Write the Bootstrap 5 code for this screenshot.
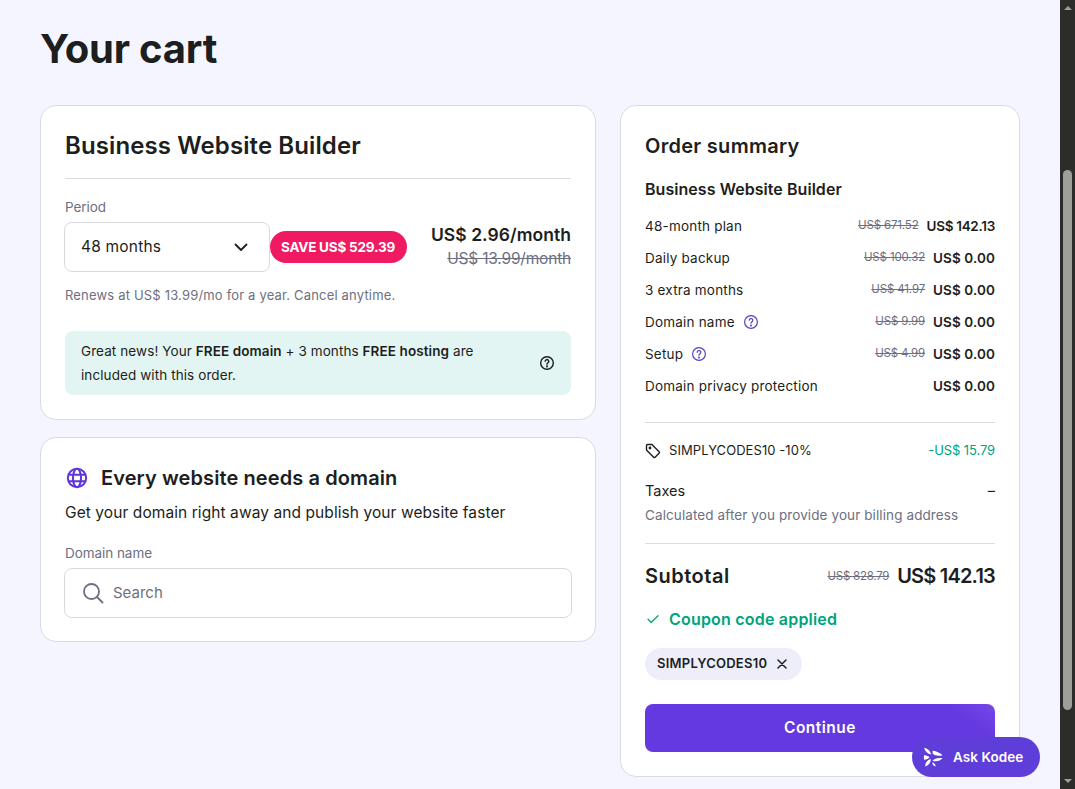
<!DOCTYPE html>
<html lang="en">
<head>
<meta charset="utf-8">
<title>Your cart</title>
<link href="https://cdn.jsdelivr.net/npm/bootstrap@5.3.0/dist/css/bootstrap.min.css" rel="stylesheet">
<style>
html,body{height:789px;overflow:hidden}
body{font-family:Inter,"Liberation Sans",sans-serif;color:#1d1e20;background:#f4f5ff;font-size:14px}
.shell{height:789px}
.pagearea{width:1060px;padding:0 40px;position:relative}
.pagetitle{font-size:40px;font-weight:700;line-height:44px;margin:27px 0 34px;letter-spacing:-.2px}
.colleft{width:556px;gap:17px}
.colright{width:400px}
.panel{background:#fff;border:1px solid #d8dae6;border-radius:16px;padding:24px}
.paneltop{height:315px}
.paneldomain{height:205px}
.panelsum{height:672px}
.paneltitle{font-size:24px;font-weight:600;line-height:32px;margin:0;letter-spacing:.1px}
.rule{border-top:1px solid #dadce0;opacity:1;margin:0}
.fieldlabel{font-size:13.5px;line-height:20px;color:#6d7081;letter-spacing:-.05px}
.pick{width:206px;height:50px;margin-left:-1px;border:1px solid #d8dae0;border-radius:8px;padding:0 21px 0 16px;font-size:15.5px;letter-spacing:.2px}
.savepill{height:32px;padding:0 12px 0 11px;background:#f01a62;color:#fff;border-radius:16px;font-size:13.5px;font-weight:700;line-height:32px;white-space:nowrap;letter-spacing:-.2px}
.pricenow{font-size:17.5px;font-weight:600;line-height:24px;letter-spacing:.05px;margin-top:-2px}
.priceold{font-size:15.5px;line-height:22px;color:#6d7081;text-decoration:line-through;margin-top:1px;letter-spacing:-.2px}
.mutedline{font-size:13px;line-height:20px;color:#6d7081;letter-spacing:.18px}
.newsbox{background:#e3f5f2;border-radius:8px;height:64px;padding:8px 16px;font-size:13.5px;line-height:24px;letter-spacing:.09px}
.newstext{width:420px}
.domaintitle{font-size:20px;font-weight:600;line-height:28px;letter-spacing:.1px}
.domainsub{font-size:15.5px;line-height:24px;letter-spacing:.08px}
.searchbox{height:50px;margin:5px -1px 0;border:1px solid #d8dae0;border-radius:8px;padding:0 17px;gap:9px;color:#6d7081;font-size:15px}
.sumtitle{font-size:20px;font-weight:600;line-height:32px;letter-spacing:.28px}
.sumname{font-size:16px;font-weight:600;line-height:24px;margin-top:15px;margin-bottom:9px;letter-spacing:.05px}
.sumrow{height:32px;font-size:13.5px;letter-spacing:.2px}
.strike{font-size:11.5px;color:#6d7081;text-decoration:line-through;margin-right:8px;letter-spacing:-.15px}
.amount{font-size:13.5px;font-weight:600;letter-spacing:-.3px}
.zeroamt{letter-spacing:.1px}
.couponline{height:24px;font-size:13px;letter-spacing:.07px}
.greenamt{color:#00a37a;letter-spacing:-.1px}
.subtotal{font-size:20px;font-weight:600;line-height:32px;letter-spacing:.5px}
.subnow{letter-spacing:-.8px}
.subold{font-size:11.5px;color:#6d7081;text-decoration:line-through;margin-right:8px;letter-spacing:-.25px;font-weight:400}
.applied{color:#00a37a;font-size:16px;font-weight:600;line-height:24px;letter-spacing:.2px}
.chipcode{height:32px;padding:0 15px 0 12px;background:#eeeefb;border-radius:16px;font-size:13px;font-weight:600;letter-spacing:.25px;gap:10px}
.gocontinue{height:48px;background:linear-gradient(215deg,#7448ea 0,#6539e0 12%,#6539e0 100%);border:0;border-radius:8px;color:#fff;font-size:15.5px;font-weight:600;width:100%;letter-spacing:.5px}
.askkodee{position:absolute;left:912px;top:737px;width:128px;height:40px;background:#5f3dd9;color:#fff;border-radius:20px;font-size:13.5px;font-weight:600;padding-left:11px;gap:10px;letter-spacing:.05px}
.scrolltrack{width:15px;height:789px;background:#2c2c2a;position:relative}
.scrollup{width:0;height:0;border-left:4px solid transparent;border-right:4px solid transparent;border-bottom:4px solid #9f9f9a;margin:6px auto 0}
.scrolldown{width:0;height:0;border-left:4px solid transparent;border-right:4px solid transparent;border-top:4px solid #9f9f9a;margin:0 auto 6px}
.scrollthumb{width:9px;height:540px;background:#9f9f9a;border-radius:5px;margin:0 auto}
.periodrow{margin-top:5px}
</style>
</head>
<body>
<div class="d-flex shell">
  <div class="pagearea flex-shrink-0">
    <h1 class="pagetitle">Your cart</h1>
    <div class="d-flex gap-4 align-items-start">
      <div class="colleft d-flex flex-column">
        <section class="panel paneltop">
          <h2 class="paneltitle mb-3">Business Website Builder</h2>
          <hr class="rule">
          <div class="fieldlabel" style="margin-top:18px">Period</div>
          <div class="d-flex align-items-center periodrow">
            <div class="pick d-flex align-items-center justify-content-between bg-white flex-shrink-0">
              <span>48 months</span>
              <svg width="14" height="9" viewBox="0 0 14 9" fill="none" stroke="#1d1e20" stroke-width="1.8" stroke-linecap="round" stroke-linejoin="round"><path d="M1.5 1.5 7 7l5.5-5.5"/></svg>
            </div>
            <span class="savepill">SAVE US$ 529.39</span>
            <div class="ms-auto text-end">
              <div class="pricenow">US$ 2.96/month</div>
              <div class="priceold">US$ 13.99/month</div>
            </div>
          </div>
          <div class="mutedline" style="margin-top:13px">Renews at US$ 13.99/mo for a year. Cancel anytime.</div>
          <div class="newsbox d-flex align-items-center justify-content-between" style="margin-top:26px">
            <div class="newstext">Great news! Your <b class="fw-semibold">FREE domain</b> + 3 months <b class="fw-semibold">FREE hosting</b> are included with this order.</div>
            <svg width="16" height="16" viewBox="0 0 16 16" fill="none" stroke="#1d1e20" stroke-width="1.4" stroke-linecap="round"><circle cx="8" cy="8" r="6.3"/><path d="M6.2 6.3a1.8 1.8 0 1 1 2.7 1.6c-.6.3-.9.7-.9 1.3"/><circle cx="8" cy="11.4" r=".4" fill="#1d1e20"/></svg>
          </div>
        </section>
        <section class="panel paneldomain">
          <div class="d-flex align-items-center" style="margin-top:2px">
            <svg width="22" height="22" viewBox="0 0 24 24" fill="none" stroke="#6136d8" stroke-width="2.2" class="flex-shrink-0" style="margin:0 13px 0 1px"><circle cx="12" cy="12" r="10"/><ellipse cx="12" cy="12" rx="4.4" ry="10"/><path d="M2.6 8.5h18.8M2.6 15.5h18.8"/></svg>
            <span class="domaintitle">Every website needs a domain</span>
          </div>
          <div class="domainsub" style="margin-top:9px">Get your domain right away and publish your website faster</div>
          <div class="fieldlabel" style="margin-top:18px">Domain name</div>
          <div class="searchbox d-flex align-items-center">
            <svg width="22" height="22" viewBox="0 0 22 22" fill="none" stroke="#6d7081" stroke-width="1.8" stroke-linecap="round" class="flex-shrink-0"><circle cx="9.500" cy="9.500" r="7.500"/><path d="m15 15 5.500 5.500"/></svg>
            <span>Search</span>
          </div>
        </section>
      </div>
      <aside class="colright panel panelsum">
        <div class="sumtitle">Order summary</div>
        <div class="sumname">Business Website Builder</div>
        <div class="sumrow d-flex align-items-center"><span>48-month plan</span><span class="ms-auto strike">US$ 671.52</span><span class="amount">US$ 142.13</span></div>
        <div class="sumrow d-flex align-items-center"><span>Daily backup</span><span class="ms-auto strike">US$ 100.32</span><span class="amount zeroamt">US$ 0.00</span></div>
        <div class="sumrow d-flex align-items-center"><span>3 extra months</span><span class="ms-auto strike">US$ 41.97</span><span class="amount zeroamt">US$ 0.00</span></div>
        <div class="sumrow d-flex align-items-center"><span>Domain name</span>
          <svg class="ms-2" width="16" height="16" viewBox="0 0 16 16" fill="none" stroke="#5a3fc0" stroke-width="1.2" stroke-linecap="round"><circle cx="8" cy="8" r="6.4"/><path d="M6.2 6.3a1.8 1.8 0 1 1 2.7 1.6c-.6.3-.9.7-.9 1.3"/><circle cx="8" cy="11.4" r=".4" fill="#5a3fc0"/></svg>
          <span class="ms-auto strike">US$ 9.99</span><span class="amount zeroamt">US$ 0.00</span></div>
        <div class="sumrow d-flex align-items-center"><span>Setup</span>
          <svg class="ms-2" width="16" height="16" viewBox="0 0 16 16" fill="none" stroke="#5a3fc0" stroke-width="1.2" stroke-linecap="round"><circle cx="8" cy="8" r="6.4"/><path d="M6.2 6.3a1.8 1.8 0 1 1 2.7 1.6c-.6.3-.9.7-.9 1.3"/><circle cx="8" cy="11.4" r=".4" fill="#5a3fc0"/></svg>
          <span class="ms-auto strike">US$ 4.99</span><span class="amount zeroamt">US$ 0.00</span></div>
        <div class="sumrow d-flex align-items-center"><span>Domain privacy protection</span><span class="ms-auto amount zeroamt">US$ 0.00</span></div>
        <hr class="rule" style="margin-top:20px">
        <div class="couponline d-flex align-items-center" style="margin-top:16px">
          <svg class="me-2" width="16" height="16" viewBox="0 0 16 16" fill="none" stroke="#1d1e20" stroke-width="1.4" stroke-linejoin="round"><path d="M1.500 2.600c0-.6.5-1.100 1.100-1.100h4.300l7.200 7.200c.4.4.4 1.100 0 1.500l-4 4c-.4.4-1.100.4-1.500 0L1.500 7z"/><circle cx="5" cy="5" r=".7" fill="#1d1e20"/></svg>
          <span>SIMPLYCODES10 -10%</span><span class="ms-auto greenamt">-US$ 15.79</span></div>
        <div class="d-flex justify-content-between" style="margin-top:16px;font-size:14.5px;line-height:24px"><span>Taxes</span><span>–</span></div>
        <div class="mutedline" style="line-height:24px;letter-spacing:.1px;font-size:13.5px">Calculated after you provide your billing address</div>
        <hr class="rule" style="margin-top:16px">
        <div class="d-flex align-items-center subtotal" style="margin-top:16px"><span>Subtotal</span><span class="ms-auto subold">US$ 828.79</span><span class="subnow">US$ 142.13</span></div>
        <div class="d-flex align-items-center gap-2 applied" style="margin-top:15px">
          <svg width="16" height="16" viewBox="0 0 16 16" fill="none" stroke="#00a37a" stroke-width="1.3" stroke-linecap="round" stroke-linejoin="round"><path d="m3 8.300 3.200 3.200L13 4.800"/></svg>
          <span>Coupon code applied</span></div>
        <div class="d-flex" style="margin-top:17px"><span class="chipcode d-inline-flex align-items-center">SIMPLYCODES10
          <svg width="10" height="10" viewBox="0 0 10 10" fill="none" stroke="#1d1e20" stroke-width="1.5" stroke-linecap="round"><path d="m1 1 8 8M9 1 1 9"/></svg></span></div>
        <button class="gocontinue d-block" style="margin-top:24px">Continue</button>
      </aside>
    </div>
    <div class="askkodee d-flex align-items-center">
      <svg width="20" height="20" viewBox="0 0 20 20" fill="#fff"><path d="M1 .8c3.300.4 6 2.700 7.200 6.600C4.700 7 2 4.600 1 .8zM1.200 12.800C.6 11 .7 9.300 1.500 7.900c2.300.5 4.100 1.300 5 2.300-1 1.400-3 2.400-5.300 2.600zM2.300 19.500c-.5-3.300 1.700-6.500 5.500-7.600 0 3.400-2 6.300-5.500 7.600zM9.600 3.700c3 .2 6.500 1.500 10 4.500-4 1.200-7.800.4-10-1.700zM9.500 13.500c2.500-2.300 6.200-3.200 10.100-2.200-3 3-6.700 3.900-10.100 2.200zM9.500 15.300c1.800 1 3 2.400 3.300 4-2.300-.2-3.700-1.700-3.300-4z"/></svg>
      <span>Ask Kodee</span>
    </div>
  </div>
  <div class="scrolltrack flex-shrink-0 d-flex flex-column">
    <div class="scrollup"></div>
    <div class="scrollthumb" style="margin-top:160px"></div>
    <div class="flex-grow-1"></div>
    <div class="scrolldown"></div>
  </div>
</div>
<script src="https://cdn.jsdelivr.net/npm/bootstrap@5.3.0/dist/js/bootstrap.bundle.min.js"></script>
</body>
</html>
